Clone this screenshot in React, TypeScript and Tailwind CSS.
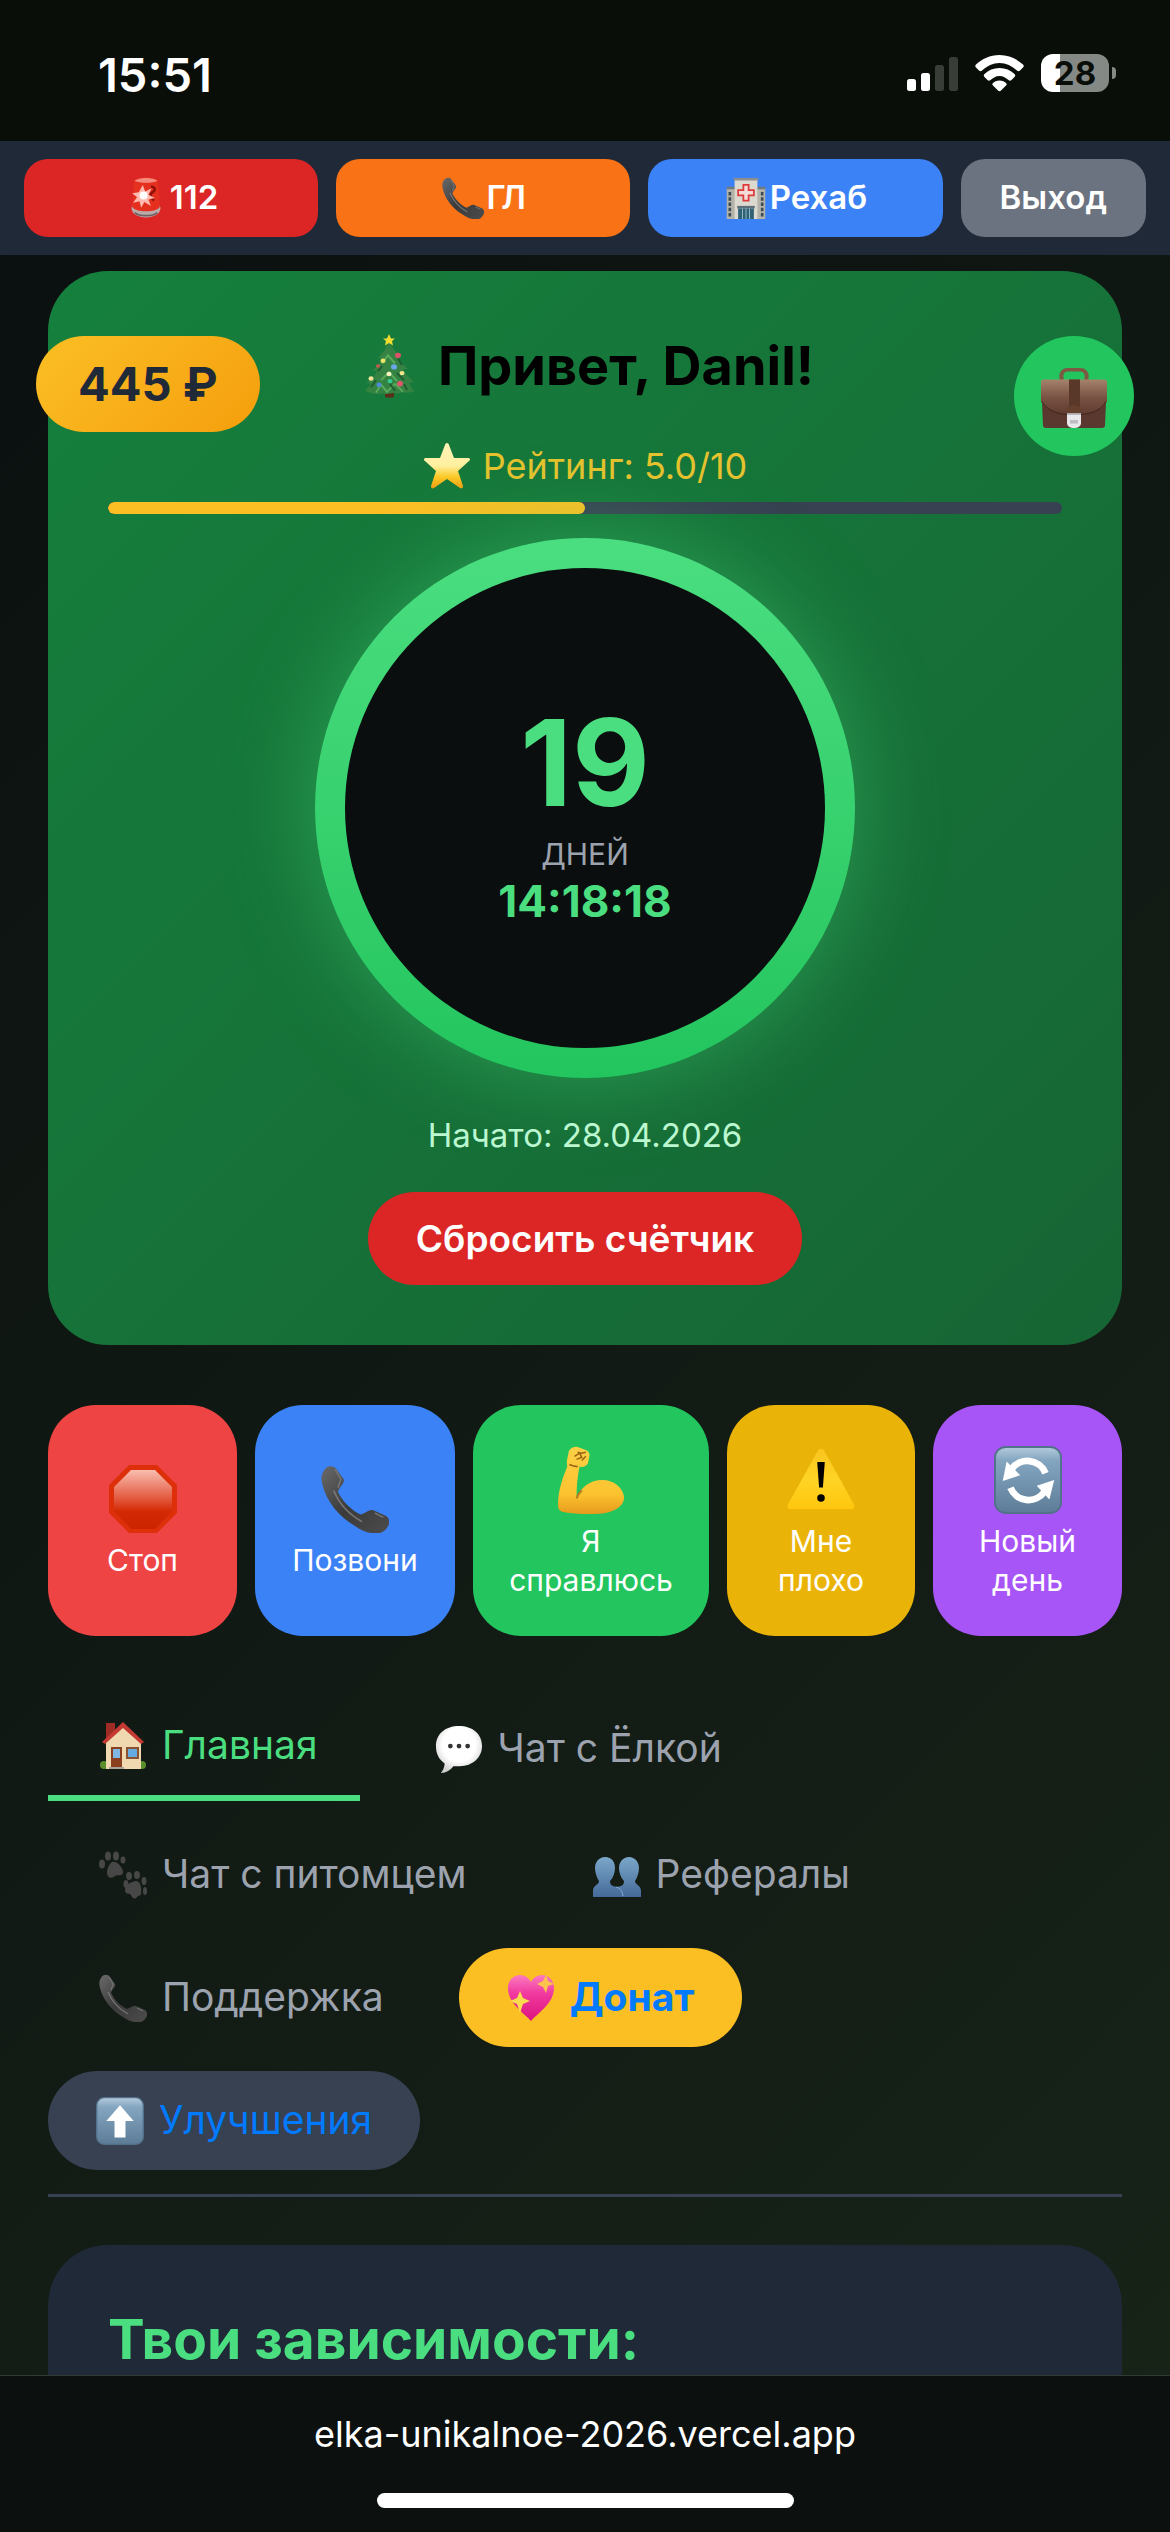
import type { ReactNode } from "react";

type IconProps = { className?: string };

function Phone({ className }: IconProps) {
  return (
    <svg viewBox="0 0 48 48" className={className} aria-hidden="true">
      <defs>
        <linearGradient id="phone" x1="0" y1="0" x2="1" y2="1">
          <stop offset="0" stopColor="#6a6a6a" />
          <stop offset="0.5" stopColor="#3a3a3a" />
          <stop offset="1" stopColor="#4c4c4c" />
        </linearGradient>
      </defs>
      <path
        d="M2 4C4 0 9 0 11 3l5 7c1 3-3 5-4 9 4 8 10 13 16 16 4-1 6-4 9-3l9 4c4 3 2 8-2 11-5 3-13 1-20-4C13 37 4 26 1 14 0 10 0 7 2 4Z"
        fill="url(#phone)"
      />
      <path d="M9 18c4 10 11 17 20 22" fill="none" stroke="#8a8a8a" strokeWidth="1.2" opacity="0.7" />
      <path d="M10 3l4 7-2 6M38 34l6 3" fill="none" stroke="#777" strokeWidth="1" />
    </svg>
  );
}

function Siren({ className }: IconProps) {
  return (
    <svg viewBox="0 0 48 52" className={className} aria-hidden="true">
      <path d="M6 38c0 16 36 16 36 0l-2-4H8Z" fill="#b9a9a9" />
      <path d="M10 44c6 5 22 5 28 0" fill="none" stroke="#6f5f60" strokeWidth="2" />
      <path d="M9 5c1-6 29-6 30 0l2 32c-3 7-31 7-34 0Z" fill="#e5301f" />
      <path d="M10 5c4-5 24-5 28 0-6 3-22 3-28 0Z" fill="#f58a7e" />
      <path d="M30 12c6 0 6 5 2 7s-3 7 2 10" fill="none" stroke="#8f1109" strokeWidth="3" />
      <path d="M20 10l3 8 8-4-4 8 8 4-8 2 3 8-8-5-4 7-2-8-8 2 5-7-6-5 8-1Z" fill="#ffb9ae" />
      <circle cx="21" cy="23" r="5" fill="#fff" />
    </svg>
  );
}

function Hospital({ className }: IconProps) {
  return (
    <svg viewBox="0 0 48 48" className={className} aria-hidden="true">
      <path d="M2 12h12v36H2zM34 12h12v36H34z" fill="#b4b2a9" />
      <path d="M2 11h12v3H2zM34 11h12v3H34z" fill="#6f7a80" />
      <path d="M5.500 17v28M42.500 17v28" stroke="#3c4b55" strokeWidth="3" strokeDasharray="4 2" />
      <path d="M11 3h26v45H11z" fill="#dcd9d0" />
      <path d="M10 1h28v3H10z" fill="#8b8f90" />
      <path
        d="M21 9h6v6h6v6h-6v6h-6v-6h-6v-6h6Z"
        fill="#f6dcd8"
        stroke="#dd3b3b"
        strokeWidth="2"
      />
      <path d="M14 33h20v3H14z" fill="#5c6e78" />
      <path d="M15 36h18v12H15z" fill="#2f6275" />
      <path d="M20 36v12M24 36v12M28 36v12" stroke="#9fc1cb" strokeWidth="1" />
    </svg>
  );
}

function Tree({ className }: IconProps) {
  return (
    <svg viewBox="0 0 50 72" preserveAspectRatio="none" className={className} aria-hidden="true">
      <path d="M21 60h9v11c-3 1-6 1-9 0Z" fill="#5a2f17" />
      <path
        d="M25 8c3 8 7 12 11 17l-3 1c3 6 7 9 11 13l-5 1c3 6 7 10 11 14l-5 1 5 10c-7 2-13 0-17 2-5-2-9 2-14 0-6 1-12 0-18-3l6-8-5-1c5-4 9-8 11-13l-5-1c5-4 8-8 10-13l-4-1c5-6 8-11 11-18Z"
        fill="#348343"
      />
      <path
        d="M12 66l5-9 6 8 8-9 8 9M17 52l8-9 8 10M18 33l6-9 7 9"
        fill="none"
        stroke="#5bab5c"
        strokeWidth="2"
      />
      <path
        d="M34 28l4 7M33 44l7 8M18 36l-4 6M26 56l5 8M12 52l-5 8M40 56l3 7"
        fill="none"
        stroke="#205c31"
        strokeWidth="2"
      />
      <path d="M25 0l2 5 4 0-3 3 1 5-4-3-4 3 1-5-3-3 4 0Z" fill="#f2dc2f" />
      <circle cx="34" cy="24" r="3" fill="#e0526a" />
      <circle cx="19" cy="30" r="2.500" fill="#f1e36a" />
      <circle cx="30" cy="37" r="3" fill="#6aa6e8" />
      <circle cx="14" cy="36" r="2" fill="#c8574f" />
      <circle cx="38" cy="44" r="2.500" fill="#f4e58b" />
      <circle cx="25" cy="45" r="2.500" fill="#fbf2c0" />
      <circle cx="7" cy="50" r="2.500" fill="#f6e39a" />
      <circle cx="26" cy="53" r="2.500" fill="#34c98f" />
      <circle cx="15" cy="57" r="2.500" fill="#4a8be0" />
      <circle cx="36" cy="56" r="3" fill="#e2556b" />
    </svg>
  );
}

function Star({ className }: IconProps) {
  return (
    <svg viewBox="0 0 48 48" className={className} aria-hidden="true">
      <defs>
        <linearGradient id="star" x1="0" y1="0" x2="0" y2="1">
          <stop offset="0" stopColor="#fff3b8" />
          <stop offset="0.5" stopColor="#fff0a0" />
          <stop offset="0.75" stopColor="#fdc926" />
          <stop offset="1" stopColor="#ee9d12" />
        </linearGradient>
      </defs>
      <path
        d="M24 1c1 0 2 1 2 2l5 13 14 0c2 0 3 2 1 3L35 29l5 15c0 2-1 3-3 2l-13-9-13 9c-2 1-3 0-3-2l5-15L2 19c-2-1-1-3 1-3l14 0 5-13c0-1 1-2 2-2Z"
        fill="url(#star)"
      />
    </svg>
  );
}

function Briefcase({ className }: IconProps) {
  return (
    <svg viewBox="0 0 66 68" preserveAspectRatio="none" className={className} aria-hidden="true">
      <defs>
        <linearGradient id="case" x1="0" y1="0" x2="0" y2="1">
          <stop offset="0" stopColor="#a5836c" />
          <stop offset="0.5" stopColor="#795243" />
          <stop offset="1" stopColor="#5d3a2e" />
        </linearGradient>
      </defs>
      <path d="M21 14c-2-6 0-12 6-12h12c6 0 8 6 6 12" fill="none" stroke="#7d5944" strokeWidth="4" />
      <path d="M1 40l1 25c0 2 1 3 3 3h56c2 0 3-1 3-3l1-25Z" fill="#5a372f" />
      <path d="M3 13h60c2 0 3 1 3 3v22c-6 11-16 16-33 16S6 49 0 38V16c0-2 1-3 3-3Z" fill="url(#case)" />
      <path d="M1 38c6 11 15 15 32 15s26-4 32-15" fill="none" stroke="#3c201a" strokeWidth="1" />
      <path d="M28 13h11v31H28z" fill="#593729" />
      <path d="M26 49c0-9 14-9 14 0v5H26Z" fill="#65402f" />
      <path d="M26 51h14v11c0 5-4 6-7 6s-7-1-7-6Z" fill="#e9e9ec" />
      <path d="M29 59h8v4h-8z" fill="#bdbdc4" />
      <path d="M26 51h14v2H26z" fill="#a9a9ae" />
    </svg>
  );
}

function StopSign({ className }: IconProps) {
  return (
    <svg viewBox="0 0 68 68" className={className} aria-hidden="true">
      <defs>
        <linearGradient id="stop" x1="0" y1="0" x2="0" y2="1">
          <stop offset="0" stopColor="#f9bdb0" />
          <stop offset="0.5" stopColor="#e2553a" />
          <stop offset="0.7" stopColor="#d32a04" />
          <stop offset="1" stopColor="#cc2400" />
        </linearGradient>
      </defs>
      <path d="M20 0h28l20 20v28L48 68H20L0 48V20Z" fill="#de2f0b" />
      <path d="M22 5h24l17 17v24L46 64H22L5 46V22Z" fill="url(#stop)" />
    </svg>
  );
}

function Muscle({ className }: IconProps) {
  return (
    <svg viewBox="0 0 66 66" className={className} aria-hidden="true">
      <defs>
        <linearGradient id="arm" x1="0" y1="0" x2="0" y2="1">
          <stop offset="0" stopColor="#fdd046" />
          <stop offset="0.7" stopColor="#fcc32f" />
          <stop offset="1" stopColor="#e79a1c" />
        </linearGradient>
      </defs>
      <path
        d="M11 8c0-5 5-8 9-7l8 3c4 2 4 5 3 8l-1 5c-2 3-5 4-8 3-2 8-3 20-3 31 4-11 13-18 25-18 12 0 20 8 21 16 1 8-7 14-18 16-14 2-30 1-41-1-4-1-5-3-5-7 0-13 4-25 9-37-1-4 0-8 1-12Z"
        fill="url(#arm)"
      />
      <path d="M20 6l4 1 4-1M17 10l5-3 2 4-5 2M28 10l-4 4M20 20c-3 0-6-1-8-2" fill="none" stroke="#9a6415" strokeWidth="1.500" />
      <path d="M19 51c1-3 2-5 5-8" fill="none" stroke="#b87b1b" strokeWidth="2" />
    </svg>
  );
}

function Warning({ className }: IconProps) {
  return (
    <svg viewBox="0 0 72 72" className={className} aria-hidden="true">
      <defs>
        <linearGradient id="warn" x1="0" y1="0" x2="0" y2="1">
          <stop offset="0" stopColor="#f9c51f" />
          <stop offset="0.5" stopColor="#ffd425" />
          <stop offset="1" stopColor="#ffc60d" />
        </linearGradient>
      </defs>
      <path d="M36 3c2 0 3 1 4 3l31 56c1 3 0 5-3 5H4c-3 0-4-2-3-5L32 6c1-2 2-3 4-3Z" fill="url(#warn)" />
      <path d="M32 17h8l-2 27h-4Z" fill="#000" />
      <circle cx="36" cy="55" r="4" fill="#000" />
    </svg>
  );
}

function KeyTile({ children, className }: IconProps & { children: ReactNode }) {
  return (
    <svg viewBox="0 0 70 70" className={className} aria-hidden="true">
      <defs>
        <linearGradient id="tile" x1="0" y1="0" x2="0" y2="1">
          <stop offset="0" stopColor="#b4cbdc" />
          <stop offset="0.2" stopColor="#84a6c0" />
          <stop offset="1" stopColor="#5d7c97" />
        </linearGradient>
      </defs>
      <rect x="1" y="1" width="68" height="68" rx="11" fill="url(#tile)" stroke="#53718b" strokeWidth="2" />
      {children}
    </svg>
  );
}

function Refresh({ className }: IconProps) {
  return (
    <KeyTile className={className}>
      <path d="M53 28A20 20 0 0 0 18 24" fill="none" stroke="#fff" strokeWidth="7" />
      <path d="M17 43a20 20 0 0 0 35 4" fill="none" stroke="#fff" strokeWidth="7" />
      <path d="M13 16l14 14-18 6ZM57 55L44 41l18-6Z" fill="#fff" />
    </KeyTile>
  );
}

function ArrowUp({ className }: IconProps) {
  return (
    <KeyTile className={className}>
      <path d="M35 12l20 23H43v24H27V35H15Z" fill="#fff" />
    </KeyTile>
  );
}

function House({ className }: IconProps) {
  return (
    <svg viewBox="0 0 48 48" className={className} aria-hidden="true">
      <circle cx="5" cy="43" r="4" fill="#5c8f2c" />
      <circle cx="43" cy="43" r="4" fill="#5c8f2c" />
      <path d="M7 1h9v16H7z" fill="#9f2b25" />
      <path d="M7 20L24 4l18 16v27H7Z" fill="#f0d9b0" />
      <path d="M3 20L24 0l21 20-3 2L24 6 6 22Z" fill="#c43a33" />
      <path d="M12 25h11v20H12z" fill="#8a3f1f" />
      <path d="M14 27h7v9h-7z" fill="#7fb8e2" />
      <path d="M27 25h13v12H27z" fill="#8a5230" />
      <path d="M29 27h9v8h-9z" fill="#65abe2" />
      <path d="M10 45h15v2H10z" fill="#a9a39a" />
    </svg>
  );
}

function Bubble({ className }: IconProps) {
  return (
    <svg viewBox="0 0 48 50" className={className} aria-hidden="true">
      <defs>
        <radialGradient id="bubble" cx="0.5" cy="0.4" r="0.6">
          <stop offset="0.6" stopColor="#ffffff" />
          <stop offset="1" stopColor="#d0d0d0" />
        </radialGradient>
      </defs>
      <path
        d="M24 1c14 0 24 8 24 21 0 12-10 21-23 21h-7c-3 4-7 7-13 7 2-2 4-6 4-10C3 36 0 30 0 22 0 9 10 1 24 1Z"
        fill="url(#bubble)"
      />
      <circle cx="15" cy="22" r="2.500" fill="#333" />
      <circle cx="24" cy="22" r="2.500" fill="#333" />
      <circle cx="33" cy="22" r="2.500" fill="#333" />
    </svg>
  );
}

function Paws({ className }: IconProps) {
  return (
    <svg viewBox="0 0 48 48" className={className} fill="#474747" aria-hidden="true">
      <path d="M13 11c4-2 11 5 11 10 0 5-5 2-8 4-3 3-8 2-8-3 0-4 2-9 5-11ZM37 30c4 0 6 6 5 12 0 4-2 1-4 4-2 3-5 1-6-2-1-2-5 0-6-4-1-4 6-10 11-10Z" />
      <ellipse cx="3" cy="13" rx="3" ry="4.500" />
      <ellipse cx="9" cy="5" rx="3" ry="4.500" />
      <ellipse cx="17" cy="5" rx="3" ry="4.500" />
      <ellipse cx="24" cy="9" rx="2.500" ry="3.500" />
      <ellipse cx="27" cy="33" rx="2.500" ry="4" />
      <ellipse cx="30" cy="25" rx="3" ry="4" />
      <ellipse cx="38" cy="24" rx="3" ry="4" />
      <ellipse cx="45" cy="30" rx="2.500" ry="4" />
      <ellipse cx="46" cy="40" rx="2" ry="4" />
    </svg>
  );
}

function People({ className }: IconProps) {
  return (
    <svg viewBox="0 0 48 48" className={className} aria-hidden="true">
      <defs>
        <linearGradient id="people" x1="0" y1="0" x2="0" y2="1">
          <stop offset="0" stopColor="#7ba7c9" />
          <stop offset="1" stopColor="#456a9a" />
        </linearGradient>
      </defs>
      <path
        d="M12 6c7 0 10 5 10 11 0 5-2 10-5 13 0 4 2 5 7 6 5-1 7-2 7-6-3-3-5-8-5-13 0-6 4-11 10-11s10 5 10 11c0 5-2 10-4 13 0 4 6 4 6 10v6H0v-6c0-6 6-6 6-10-2-3-4-8-4-13C2 11 6 6 12 6Z"
        fill="url(#people)"
      />
      <path d="M23 36c3 1 6 2 7 9" fill="none" stroke="#7fb0d0" strokeWidth="1" />
    </svg>
  );
}

function Heart({ className }: IconProps) {
  return (
    <svg viewBox="0 0 48 48" className={className} aria-hidden="true">
      <defs>
        <linearGradient id="heart" x1="0" y1="0" x2="0" y2="1">
          <stop offset="0" stopColor="#fb7cc0" />
          <stop offset="0.4" stopColor="#f0399f" />
          <stop offset="1" stopColor="#dd1480" />
        </linearGradient>
      </defs>
      <path
        d="M24 47C16 38 1 29 1 14 1 6 7 1 13 1c5 0 9 3 11 7 2-4 6-7 11-7 6 0 12 5 12 13 0 15-15 24-23 33Z"
        fill="url(#heart)"
      />
      <path d="M39 1l2 6 6 3-6 2-2 7-3-6-6-3 6-3Z" fill="#fdc44d" />
      <path d="M13 17l3 7 7 3-7 3-3 9-3-9-7-3 7-3Z" fill="#fddb4e" />
    </svg>
  );
}

function StatusBar() {
  return (
    <div className="flex h-[141px] shrink-0 items-start justify-between bg-[#090e09] pr-[54px] pl-[98px] text-white">
      <time className="pt-[45px] text-[47px] leading-[60px] font-semibold">15:51</time>
      <div className="flex items-center gap-[17px] pt-[54px]">
        <svg viewBox="0 0 51 38" className="h-[38px] w-[51px]" aria-label="Сигнал">
          <rect x="0" y="25" width="9" height="12" rx="2.500" fill="#fff" />
          <rect x="14" y="19" width="9" height="18" rx="2.500" fill="#fff" />
          <rect x="28" y="11" width="9" height="26" rx="2.500" fill="#383d38" />
          <rect x="42" y="3" width="9" height="34" rx="2.500" fill="#383d38" />
        </svg>
        <svg viewBox="0 0 49 38" className="h-[38px] w-[49px]" fill="#fff" aria-label="Wi-Fi">
          <path d="M24.500 1C34 1 42 5 48 10.500c1 1 1 2 0 3l-3 3c-1 1-2 1-3 0C37 12 31 9 24.500 9S12 12 7 16.500c-1 1-2 1-3 0l-3-3c-1-1-1-2 0-3C7 5 15 1 24.500 1Z" />
          <path d="M24.500 14c6 0 11 2 15 6 1 1 1 2 0 3l-3 3c-1 1-2 1-3 0-3-2-5-4-9-4s-6 2-9 4c-1 1-2 1-3 0l-3-3c-1-1-1-2 0-3 4-4 9-6 15-6Z" />
          <path d="M24.500 26.500c3 0 5 1 6.500 2.500 1 1 1 1.500 0 2.500l-5 5c-1 1-2 1-3 0l-5-5c-1-1-1-1.500 0-2.500 1.500-1.500 3.500-2.500 6.500-2.500Z" />
        </svg>
        <div className="flex items-center gap-[3px]">
          <div className="flex h-[38px] w-[68px] items-center justify-center rounded-xl bg-linear-to-r from-white from-28% to-[#858985] to-28% text-[33px] leading-[38px] font-bold text-[#090e09]">
            28
          </div>
          <div className="h-3 w-1 rounded-r-full bg-[#858985]" />
        </div>
      </div>
    </div>
  );
}

const topButton =
  "flex h-[78px] items-center justify-center gap-0.5 rounded-3xl text-[33px] font-semibold text-white";

function Header() {
  return (
    <header className="flex h-[114px] shrink-0 items-center gap-[18px] bg-[#1f2937] px-6">
      <button className={`${topButton} flex-1 bg-[#dc2626]`}>
        <Siren className="h-[42px] w-11" />
        112
      </button>
      <button className={`${topButton} flex-1 bg-[#f97316]`}>
        <Phone className="h-[42px] w-11" />
        ГЛ
      </button>
      <button className={`${topButton} flex-1 bg-[#3b82f6]`}>
        <Hospital className="h-[42px] w-11" />
        Рехаб
      </button>
      <button className={`${topButton} bg-[#6b7280] px-[39px]`}>Выход</button>
    </header>
  );
}

function CounterCard() {
  const rating = 5;
  return (
    <section className="relative flex flex-col items-center rounded-[60px] bg-linear-135 from-[#15803d] to-[#166534] p-[60px]">
      <div className="absolute top-[65px] -left-3 flex h-24 items-center rounded-full bg-linear-135 from-[#fbbf24] to-[#f59e0b] px-[42px] text-[47px] font-bold text-[#1f2937]">
        445 ₽
      </div>
      <button
        aria-label="Портфель"
        className="absolute top-[65px] -right-3 flex size-[120px] items-center justify-center rounded-full bg-[#22c55e]"
      >
        <Briefcase className="mt-1 h-[60px] w-[66px]" />
      </button>

      <h1 className="flex items-center gap-6 pl-2 text-[54px] leading-[70px] font-bold text-black">
        <Tree className="h-16 w-[50px]" />
        Привет, Danil!
      </h1>
      <p className="mt-[38px] flex items-center gap-3 text-[36px] leading-[54px] text-[#e6c22e]">
        <Star className="size-12" />
        Рейтинг: 5.0/10
      </p>
      <div className="mt-[9px] h-3 w-full overflow-hidden rounded-full bg-[#374151]">
        <div className="h-full rounded-full bg-[#fbbf24]" style={{ width: `${rating * 10}%` }} />
      </div>

      <div className="mt-6 rounded-full bg-linear-to-b from-[#4ade80] to-[#22c55e] p-[30px] shadow-[0_0_90px_rgba(74,222,128,0.4)]">
        <div className="flex size-[480px] flex-col items-center justify-center rounded-full bg-[#0a0e0e] pt-3 text-[#4ade80]">
          <span className="text-[120px] leading-[120px] font-bold">19</span>
          <span className="mt-[9px] text-[30px] leading-[45px] text-[#9ca3af]">ДНЕЙ</span>
          <span className="text-[44px] leading-[48px] font-bold">14:18:18</span>
        </div>
      </div>

      <p className="mt-[33px] text-[33px] leading-[48px] text-[#bbf7d0]">Начато: 28.04.2026</p>
      <button className="mt-[33px] h-[93px] rounded-full bg-[#dc2626] px-12 text-[37px] font-semibold text-white">
        Сбросить счётчик
      </button>
    </section>
  );
}

const actions = [
  { label: "Стоп", icon: StopSign, color: "bg-[#ef4444]" },
  { label: "Позвони", icon: Phone, color: "bg-[#3b82f6]" },
  { label: "Я справлюсь", icon: Muscle, color: "bg-[#22c55e]" },
  { label: "Мне плохо", icon: Warning, color: "bg-[#eab308]" },
  { label: "Новый день", icon: Refresh, color: "bg-[#a855f7]" },
];

function Actions() {
  return (
    <div className="mt-[60px] grid grid-cols-[189fr_200fr_236fr_188fr_189fr] gap-[18px]">
      {actions.map(({ label, icon: Icon, color }) => (
        <button
          key={label}
          className={`flex h-[231px] flex-col items-center justify-center gap-2 rounded-[48px] px-8 pt-1 text-[30px] leading-[39px] text-white ${color}`}
        >
          <Icon className="size-[68px]" />
          {label}
        </button>
      ))}
    </div>
  );
}

const tab = "flex h-[99px] items-center gap-[15px] px-[51px] text-[39px]";
const pill = "flex h-[99px] items-center gap-[15px] rounded-full px-12 text-[39px] text-[#007aff]";

function Tabs() {
  return (
    <nav className="mt-[60px] flex flex-wrap items-center gap-6 border-b-[3px] border-[#374151] pb-6">
      <button className="flex h-[105px] items-center gap-[15px] border-b-[6px] border-[#4ade80] pr-[42px] pl-[51px] text-[39px] text-[#4ade80]">
        <House className="size-12" />
        Главная
      </button>
      <button className={`${tab} text-[#9ca3af]`}>
        <Bubble className="size-12" />
        Чат с Ёлкой
      </button>
      <button className={`${tab} text-[#9ca3af]`}>
        <Paws className="size-12" />
        Чат с питомцем
      </button>
      <button className={`${tab} text-[#9ca3af]`}>
        <People className="size-12" />
        Рефералы
      </button>
      <button className={`${tab} text-[#9ca3af]`}>
        <Phone className="size-12" />
        Поддержка
      </button>
      <a href="#donate" className={`${pill} bg-[#fbbf24] font-bold`}>
        <Heart className="size-12" />
        Донат
      </a>
      <a href="#upgrades" className={`${pill} bg-[#374151]`}>
        <ArrowUp className="size-12" />
        Улучшения
      </a>
    </nav>
  );
}

export default function App() {
  return (
    <div className="flex h-screen flex-col overflow-hidden bg-linear-135 from-[#0a0f0f] to-[#182418] font-['Inter','Noto_Sans',sans-serif]">
      <StatusBar />
      <Header />
      <main className="min-h-0 flex-1 overflow-hidden px-12 pt-4">
        <CounterCard />
        <Actions />
        <Tabs />
        <section className="mt-12 min-h-[300px] rounded-[60px] bg-[#1f2937] p-[60px]">
          <h2 className="text-[55px] leading-[68px] font-bold text-[#4ade80]">Твои зависимости:</h2>
        </section>
      </main>
      <footer className="flex h-[157px] shrink-0 flex-col items-center justify-between border-t border-[#333a36] bg-[#0c1110] pt-[34px] pb-6">
        <p className="text-[36px] leading-[48px] text-white">elka-unikalnoe-2026.vercel.app</p>
        <div className="h-[15px] w-[417px] rounded-full bg-white" />
      </footer>
    </div>
  );
}
